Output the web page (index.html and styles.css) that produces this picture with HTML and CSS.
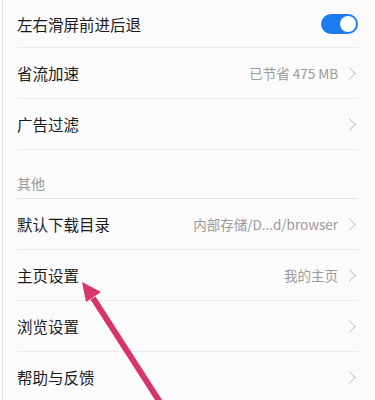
FILE: index.html
```html
<!DOCTYPE html>
<html lang="zh-CN">
  <head>
    <meta charset="UTF-8" />
    <meta name="viewport" content="width=device-width, initial-scale=1.0" />
    <title>设置</title>
    <link rel="stylesheet" href="styles.css">
  </head>
  <body>
    <div class="page">
      <ul class="list">
        <li class="row first">
          <span class="label">左右滑屏前进后退</span>
          <span class="switch on"><span class="knob"></span></span>
        </li>
        <li class="row">
          <span class="label">省流加速</span>
          <span class="value">已节省 475 MB</span>
          <span class="chevron"></span>
        </li>
        <li class="row">
          <span class="label">广告过滤</span>
          <span class="chevron"></span>
        </li>
        <li class="section">其他</li>
        <li class="row">
          <span class="label">默认下载目录</span>
          <span class="value">内部存储/D...d/browser</span>
          <span class="chevron"></span>
        </li>
        <li class="row">
          <span class="label">主页设置</span>
          <span class="value">我的主页</span>
          <span class="chevron"></span>
        </li>
        <li class="row">
          <span class="label">浏览设置</span>
          <span class="chevron"></span>
        </li>
        <li class="row">
          <span class="label">帮助与反馈</span>
          <span class="chevron"></span>
        </li>
      </ul>

      <!-- arrow drawn over the list -->
      <svg class="pointer" width="375" height="400" viewBox="0 0 375 400">
        <line x1="93" y1="298" x2="165" y2="410" stroke="#d8356f" stroke-width="6" />
        <polygon points="82,282 101,292 86,302" fill="#d8356f" />
      </svg>
    </div>
  </body>
</html>
```

FILE: styles.css
```css
body {
  margin: 0;
  padding: 0;
  background-color: #fbfbfb;
  font-family: "Noto Sans CJK SC", "Noto Sans", sans-serif;
  color: #1c1c1c;
}
.page {
  position: relative;
  height: 400px;
  overflow: hidden;
  border-left: 1px solid #e2e2e2;
  margin-left: 2px;
}
.list {
  list-style: none;
  margin: 0;
  padding: 0 17px 0 14px;
}
.row {
  display: flex;
  align-items: center;
  height: 50px;
  border-bottom: 1px solid #ebebeb;
}
.row.first {
  height: 47px;
}
.row:last-child {
  border-bottom: none;
}
.label {
  flex: 1;
  font-size: 15.5px;
}
.value {
  font-size: 13.5px;
  color: #9a9a9a;
  margin-right: 7px;
}
.chevron {
  width: 8px;
  height: 8px;
  border-top: 1.3px solid #c6c6c6;
  border-right: 1.3px solid #c6c6c6;
  transform: rotate(45deg);
  margin-right: 4px;
}
.section {
  height: 49px;
  display: flex;
  align-items: flex-end;
  font-size: 14px;
  color: #999;
  border-bottom: 1px solid #e4e4e4;
  box-sizing: border-box;
  padding-bottom: 5px;
}
.switch {
  width: 37px;
  height: 20px;
  border-radius: 10px;
  background-color: #1c7bef;
  position: relative;
}
.knob {
  position: absolute;
  top: 2px;
  right: 2px;
  width: 16px;
  height: 16px;
  border-radius: 50%;
  background-color: white;
}
.pointer {
  position: absolute;
  top: 0;
  left: -3px;
}
```
